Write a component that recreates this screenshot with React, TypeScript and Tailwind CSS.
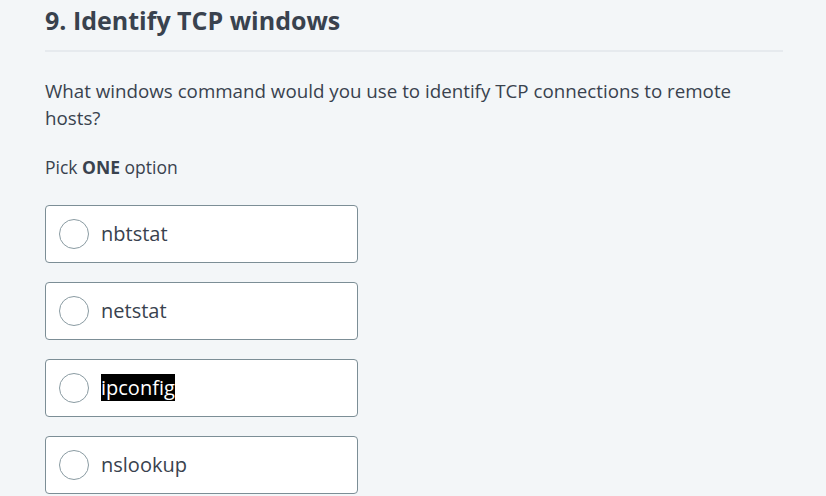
const options = ["nbtstat", "netstat", "ipconfig", "nslookup"];

export default function App() {
  return (
    <div
      className="min-h-[496px] w-[826px] bg-[#f3f6f8] text-[#39424e] overflow-hidden"
      style={{ fontFamily: '"Open Sans", sans-serif' }}
    >
      <div className="pl-[45px] pr-[43px]">
        <h1 className="text-[25px] font-bold leading-[40px]">9. Identify TCP windows</h1>
        <div className="mt-[10px] h-[2px] bg-[#e6eaee]" />
        <p className="mt-[25px] text-[18.75px] leading-[27px] pr-[20px]">
          What windows command would you use to identify TCP connections to remote hosts?
        </p>
        <p className="mt-[23px] text-[17.5px] leading-[26px]">
          Pick <span className="font-bold">ONE</span> option
        </p>
        <div className="mt-[25px] flex flex-col gap-[19.5px] w-[313px]">
          {options.map((opt) => (
            <div
              key={opt}
              className="flex items-center h-[57.5px] rounded-[4px] border border-[#7c8e96] bg-white pl-[13px]"
            >
              <span className="w-[30px] h-[30px] rounded-full border border-[#8a9ba2] bg-white shrink-0" />
              <span className="ml-[12px] text-[20px] leading-[26px]">
                {opt === "ipconfig" ? (
                  <span className="bg-black text-white">{opt}</span>
                ) : (
                  opt
                )}
              </span>
            </div>
          ))}
        </div>
      </div>
    </div>
  );
}
